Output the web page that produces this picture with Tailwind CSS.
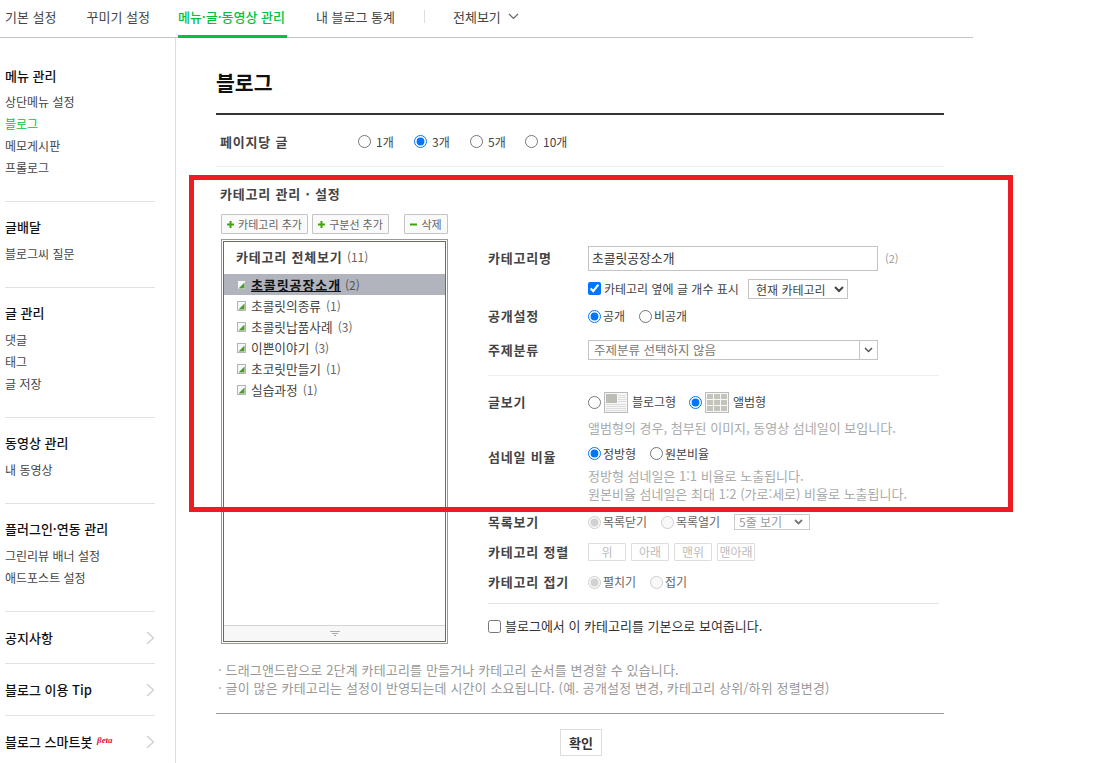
<!doctype html>
<html lang="ko">
  <head>
    <meta charset="utf-8" />
    <title>블로그 관리</title>
    <script src="https://cdn.jsdelivr.net/npm/@tailwindcss/browser@4"></script>
  </head>
  <body class="bg-white font-['Noto_Sans_CJK_KR','Noto_Sans',sans-serif] text-[12px] text-[#444] overflow-hidden">
    <div class="relative w-[1099px] h-[763px] overflow-hidden">
      <!-- top tabs -->
      <nav class="flex w-[973px] h-[38px] border-b border-[#c4c4c4] text-[13px] text-[#444]">
        <a class="ml-[5px] pt-[7px]">기본 설정</a>
        <a class="ml-[30px] pt-[7px]">꾸미기 설정</a>
        <a class="ml-[28px] w-[109px] h-[38px] pt-[7px] border-b-[3px] border-[#03c13c] text-[#03c13c] font-medium">메뉴·글·동영상 관리</a>
        <a class="ml-[29px] pt-[7px]">내 블로그 통계</a>
        <span class="ml-[29px] mt-[10px] w-px h-[13px] bg-[#ddd]"></span>
        <a class="ml-[28px] pt-[7px]">전체보기</a>
        <svg class="ml-[7px] mt-[13px]" width="11" height="7" viewBox="0 0 11 7" fill="none" stroke="#666" stroke-width="1.2"><path d="M1 1l4.5 4.5L10 1" /></svg>
      </nav>

      <div class="flex">
        <!-- sidebar -->
        <aside class="w-[176px] h-[725px] border-r border-[#ddd] pl-[5px] pr-[20px]">
          <section class="h-[164px] pt-[28px] border-b border-[#e2e2e2]">
            <h3 class="h-[20px] leading-[20px] text-[13px] font-medium text-[#111]">메뉴 관리</h3>
            <ul class="mt-[5px] leading-[22px]">
              <li>상단메뉴 설정</li>
              <li class="text-[#03c13c]">블로그</li>
              <li>메모게시판</li>
              <li>프롤로그</li>
            </ul>
          </section>
          <section class="h-[86px] pt-[15px] border-b border-[#e2e2e2]">
            <h3 class="h-[20px] leading-[20px] text-[13px] font-medium text-[#111]">글배달</h3>
            <ul class="mt-[6px] leading-[22px]"><li>블로그씨 질문</li></ul>
          </section>
          <section class="h-[130px] pt-[15px] border-b border-[#e2e2e2]">
            <h3 class="h-[20px] leading-[20px] text-[13px] font-medium text-[#111]">글 관리</h3>
            <ul class="mt-[6px] leading-[22px]"><li>댓글</li><li>태그</li><li>글 저장</li></ul>
          </section>
          <section class="h-[86px] pt-[15px] border-b border-[#e2e2e2]">
            <h3 class="h-[20px] leading-[20px] text-[13px] font-medium text-[#111]">동영상 관리</h3>
            <ul class="mt-[6px] leading-[22px]"><li>내 동영상</li></ul>
          </section>
          <section class="h-[108px] pt-[15px] border-b border-[#e2e2e2]">
            <h3 class="h-[20px] leading-[20px] text-[13px] font-medium text-[#111]">플러그인·연동 관리</h3>
            <ul class="mt-[6px] leading-[22px]"><li>그린리뷰 배너 설정</li><li>애드포스트 설정</li></ul>
          </section>
          <section class="h-[52px] flex items-center justify-between border-b border-[#e2e2e2] text-[13px] font-medium text-[#111]">
            <span>공지사항</span>
            <svg width="9" height="14" viewBox="0 0 9 14" fill="none" stroke="#ccc" stroke-width="1.2"><path d="M1 1l6.5 6L1 13" /></svg>
          </section>
          <section class="h-[52px] flex items-center justify-between border-b border-[#e2e2e2] text-[13px] font-medium text-[#111]">
            <span>블로그 이용 Tip</span>
            <svg width="9" height="14" viewBox="0 0 9 14" fill="none" stroke="#ccc" stroke-width="1.2"><path d="M1 1l6.5 6L1 13" /></svg>
          </section>
          <section class="h-[52px] flex items-center justify-between text-[13px] font-medium text-[#111]">
            <span>블로그 스마트봇 <sup class="ml-[1px] text-[9px] font-bold italic text-[#e0103a] font-['Liberation_Serif',serif]">βeta</sup></span>
            <svg width="9" height="14" viewBox="0 0 9 14" fill="none" stroke="#ccc" stroke-width="1.2"><path d="M1 1l6.5 6L1 13" /></svg>
          </section>
        </aside>

        <!-- main -->
        <main class="ml-[40px] w-[728px]">
          <h1 class="h-[77px] pt-[26px] leading-[36px] text-[20.5px] font-bold text-[#111] border-b-2 border-[#333]">블로그</h1>

          <div class="flex items-center h-[52px] pt-[2px] pl-[4px] border-b border-[#eee]">
            <strong class="w-[138px] text-[13px] tracking-[.8px] font-bold text-[#444]">페이지당 글</strong>
            <label class="flex items-center gap-[5px] w-[56px]"><input type="radio" name="page" class="m-0" />1개</label>
            <label class="flex items-center gap-[5px] w-[56px]"><input type="radio" name="page" class="m-0" checked />3개</label>
            <label class="flex items-center gap-[5px] w-[55px]"><input type="radio" name="page" class="m-0" />5개</label>
            <label class="flex items-center gap-[5px]"><input type="radio" name="page" class="m-0" />10개</label>
          </div>

          <h2 class="mt-[17px] ml-[4px] h-[20px] leading-[20px] text-[13px] tracking-[.8px] font-bold text-[#444]">카테고리 관리 · 설정</h2>

          <div class="flex mt-[10px]">
            <!-- category tree -->
            <div class="ml-[5px] w-[227px]">
              <div class="flex h-[20px] text-[#666]">
                <button class="flex items-center justify-center gap-[4px] w-[87px] border border-[#c4c4c4] rounded-[1px] bg-[#fafafa] text-[11px]">
                  <svg width="7" height="7" viewBox="0 0 7 7" fill="#3ca70a"><path d="M2.500 0h2v2.500H7v2H4.500V7h-2V4.500H0v-2h2.500z" /></svg>카테고리 추가
                </button>
                <button class="ml-[4px] flex items-center justify-center gap-[4px] w-[77px] border border-[#c4c4c4] rounded-[1px] bg-[#fafafa] text-[11px]">
                  <svg width="7" height="7" viewBox="0 0 7 7" fill="#3ca70a"><path d="M2.500 0h2v2.500H7v2H4.500V7h-2V4.500H0v-2h2.500z" /></svg>구분선 추가
                </button>
                <button class="ml-[15px] flex items-center justify-center gap-[4px] w-[44px] border border-[#c4c4c4] rounded-[1px] bg-[#fafafa] text-[11px]">
                  <svg width="7" height="7" viewBox="0 0 7 7" fill="#3ca70a"><path d="M0 2.500h7v2H0z" /></svg>삭제
                </button>
              </div>
              <div class="mt-[5px] h-[405px] border border-[#999] p-px">
                <div class="flex flex-col h-full border border-[#6b6b60]">
                  <div class="h-[32px] pt-[5px] pl-[12px] leading-[20px] shrink-0">
                    <strong class="text-[13px] tracking-[.8px] font-bold text-[#444]">카테고리 전체보기</strong> <span class="ml-[1px] text-[#666]">(11)</span>
                  </div>
                  <ul class="flex-1 leading-[21px] text-[12.7px]">
                    <li class="flex items-center h-[21px] pl-[13px] bg-[#b1b3bd]">
                      <svg class="mr-[5px]" width="9" height="10" viewBox="0 0 9 10"><rect x=".5" y=".5" width="8" height="9" fill="#f4f7fb" stroke="#b4b4b4" /><path d="M1.500 8.500L7.500 2.500v6z" fill="#4f9a2c" /></svg>
                      <b class="text-[13px] tracking-[.9px] font-bold text-[#111] underline">초콜릿공장소개</b><span class="ml-[4px] text-[12px] text-[#555]">(2)</span>
                    </li>
                    <li class="flex items-center h-[21px] pl-[13px]">
                      <svg class="mr-[5px]" width="9" height="10" viewBox="0 0 9 10"><rect x=".5" y=".5" width="8" height="9" fill="#f4f7fb" stroke="#b4b4b4" /><path d="M1.500 8.500L7.500 2.500v6z" fill="#4f9a2c" /></svg>
                      초콜릿의종류<span class="ml-[5px] text-[12px] text-[#666]">(1)</span>
                    </li>
                    <li class="flex items-center h-[21px] pl-[13px]">
                      <svg class="mr-[5px]" width="9" height="10" viewBox="0 0 9 10"><rect x=".5" y=".5" width="8" height="9" fill="#f4f7fb" stroke="#b4b4b4" /><path d="M1.500 8.500L7.500 2.500v6z" fill="#4f9a2c" /></svg>
                      초콜릿납품사례<span class="ml-[5px] text-[12px] text-[#666]">(3)</span>
                    </li>
                    <li class="flex items-center h-[21px] pl-[13px]">
                      <svg class="mr-[5px]" width="9" height="10" viewBox="0 0 9 10"><rect x=".5" y=".5" width="8" height="9" fill="#f4f7fb" stroke="#b4b4b4" /><path d="M1.500 8.500L7.500 2.500v6z" fill="#4f9a2c" /></svg>
                      이쁜이야기<span class="ml-[5px] text-[12px] text-[#666]">(3)</span>
                    </li>
                    <li class="flex items-center h-[21px] pl-[13px]">
                      <svg class="mr-[5px]" width="9" height="10" viewBox="0 0 9 10"><rect x=".5" y=".5" width="8" height="9" fill="#f4f7fb" stroke="#b4b4b4" /><path d="M1.500 8.500L7.500 2.500v6z" fill="#4f9a2c" /></svg>
                      초코릿만들기<span class="ml-[5px] text-[12px] text-[#666]">(1)</span>
                    </li>
                    <li class="flex items-center h-[21px] pl-[13px]">
                      <svg class="mr-[5px]" width="9" height="10" viewBox="0 0 9 10"><rect x=".5" y=".5" width="8" height="9" fill="#f4f7fb" stroke="#b4b4b4" /><path d="M1.500 8.500L7.500 2.500v6z" fill="#4f9a2c" /></svg>
                      실습과정<span class="ml-[5px] text-[12px] text-[#666]">(1)</span>
                    </li>
                  </ul>
                  <div class="flex items-center justify-center h-[16px] shrink-0 border-t border-[#d4d4d4] bg-[#f7f7f7]">
                    <svg width="10" height="6" viewBox="0 0 10 6" stroke="#aaa"><path d="M0 .5h10M2 2.500h6M4 4.500h2" /></svg>
                  </div>
                </div>
              </div>
            </div>

            <!-- settings form -->
            <div class="ml-[40px] w-[451px] pt-[32px]">
              <div class="flex items-center h-[25px]">
                <strong class="w-[100px] pb-[2px] text-[13px] tracking-[.8px] font-bold text-[#444]">카테고리명</strong>
                <input value="초콜릿공장소개" class="w-[290px] h-[25px] px-[3px] pb-[2px] border border-[#c4c4c4] text-[12.8px] text-[#333]" />
                <span class="ml-[7px] text-[11px] text-[#999]">(2)</span>
              </div>
              <div class="flex items-center h-[19px] mt-[8px] ml-[100px]">
                <label class="flex items-center gap-[3px] w-[151px]"><input type="checkbox" checked class="m-0" />카테고리 옆에 글 개수 표시</label>
                <select class="ml-[9px] w-[100px] h-[20px] border border-[#c4c4c4] py-0 px-[3px] text-[12px] text-[#444]"><option>현재 카테고리</option></select>
              </div>
              <div class="flex items-center h-[20px] mt-[8px]">
                <strong class="w-[100px] text-[13px] tracking-[.8px] font-bold text-[#444]">공개설정</strong>
                <label class="flex items-center gap-[2px] w-[51px]"><input type="radio" name="open" checked class="m-0" />공개</label>
                <label class="flex items-center gap-[2px]"><input type="radio" name="open" class="m-0" />비공개</label>
              </div>
              <div class="flex items-center h-[20px] mt-[14px]">
                <strong class="w-[100px] text-[13px] tracking-[.8px] font-bold text-[#444]">주제분류</strong>
                <div class="flex w-[290px] h-[20px] border border-[#c4c4c4] text-[#777] text-[12.5px]">
                  <span class="flex-1 pl-[5px] leading-[18px]">주제분류 선택하지 않음</span>
                  <span class="flex items-center justify-center w-[18px] border-l border-[#c4c4c4]">
                    <svg width="9" height="6" viewBox="0 0 9 6" fill="none" stroke="#555" stroke-width="1.500"><path d="M1 1l3.500 3.500L8 1" /></svg>
                  </span>
                </div>
              </div>
              <div class="mt-[15px] border-t border-[#eee]"></div>

              <div class="flex items-center h-[22px] mt-[15px]">
                <strong class="w-[100px] text-[13px] tracking-[.8px] font-bold text-[#444]">글보기</strong>
                <input type="radio" name="view" class="m-0" />
                <svg class="ml-[3px]" width="24" height="21" viewBox="0 0 24 21"><rect x=".5" y=".5" width="23" height="20" fill="#f7f7f7" stroke="#bbb" /><rect x="2" y="2" width="11" height="9" fill="#bdbdb5" /><path d="M14 3.500h8M14 5.500h8M14 7.500h8M14 9.500h8M2 12.500h20M2 14.500h20M2 16.500h20M2 18.500h20" stroke="#ddd" /></svg>
                <span class="ml-[4px] w-[57px]">블로그형</span>
                <input type="radio" name="view" checked class="m-0" />
                <svg class="ml-[3px]" width="24" height="21" viewBox="0 0 24 21"><rect x=".5" y=".5" width="23" height="20" fill="#f7f7f7" stroke="#bbb" /><path d="M2 2h6v5H2zM9 2h6v5H9zM16 2h6v5h-6zM2 8h6v5H2zM9 8h6v5H9zM16 8h6v5h-6zM2 14h6v5H2zM9 14h6v5H9zM16 14h6v5h-6z" fill="#c4c4bc" /></svg>
                <span class="ml-[4px]">앨범형</span>
              </div>
              <p class="ml-[100px] mt-[7px] h-[16px] leading-[16px] text-[13px] text-[#aaa]">앨범형의 경우, 첨부된 이미지, 동영상 섬네일이 보입니다.</p>
              <div class="flex h-[20px] mt-[10px]">
                <strong class="w-[100px] pt-[1px] leading-[20px] text-[13px] tracking-[.8px] font-bold text-[#444]">섬네일 비율</strong>
                <label class="flex items-center h-[15px] gap-[2px] w-[62px]"><input type="radio" name="ratio" checked class="m-0" />정방형</label>
                <label class="flex items-center h-[15px] gap-[2px]"><input type="radio" name="ratio" class="m-0" />원본비율</label>
              </div>
              <p class="ml-[100px] mt-[1px] leading-[18px] text-[13px] text-[#aaa]">정방형 섬네일은 1:1 비율로 노출됩니다.<br />원본비율 섬네일은 최대 1:2 (가로:세로) 비율로 노출됩니다.</p>

              <div class="flex items-center h-[18px] mt-[10px]">
                <strong class="w-[100px] text-[13px] tracking-[.8px] font-bold text-[#444]">목록보기</strong>
                <label class="flex items-center gap-[2px] w-[73px] text-[#666]"><input type="radio" name="list" checked disabled class="m-0" />목록닫기</label>
                <label class="flex items-center gap-[2px] w-[73px] text-[#666]"><input type="radio" name="list" disabled class="m-0" />목록열기</label>
                <div class="flex items-center justify-between w-[76px] h-[16px] border border-[#ccc] pl-[4px] pr-[6px] leading-[14px] text-[#999]">
                  <span>5줄 보기</span>
                  <svg width="9" height="6" viewBox="0 0 9 6" fill="none" stroke="#777" stroke-width="1.800"><path d="M1 1l3.500 3.500L8 1" /></svg>
                </div>
              </div>
              <div class="flex items-center h-[18px] mt-[12px]">
                <strong class="w-[100px] text-[13px] tracking-[.8px] font-bold text-[#444]">카테고리 정렬</strong>
                <div class="flex gap-[5px] text-[#bbb]">
                  <button disabled class="w-[38px] h-[18px] border border-[#ddd] rounded-[1px] leading-[16px]">위</button>
                  <button disabled class="w-[38px] h-[18px] border border-[#ddd] rounded-[1px] leading-[16px]">아래</button>
                  <button disabled class="w-[38px] h-[18px] border border-[#ddd] rounded-[1px] leading-[16px]">맨위</button>
                  <button disabled class="w-[38px] h-[18px] border border-[#ddd] rounded-[1px] leading-[16px]">맨아래</button>
                </div>
              </div>
              <div class="flex items-center h-[18px] mt-[12px]">
                <strong class="w-[100px] text-[13px] tracking-[.8px] font-bold text-[#444]">카테고리 접기</strong>
                <label class="flex items-center gap-[2px] w-[62px] text-[#666]"><input type="radio" name="fold" checked disabled class="m-0" />펼치기</label>
                <label class="flex items-center gap-[2px] text-[#666]"><input type="radio" name="fold" disabled class="m-0" />접기</label>
              </div>
              <div class="mt-[12px] border-t border-[#e2e2e2]"></div>
              <label class="flex items-center gap-[4px] h-[18px] mt-[13px] text-[13px] text-[#333]"><input type="checkbox" class="m-0" />블로그에서 이 카테고리를 기본으로 보여줍니다.</label>
            </div>
          </div>

          <p class="ml-[2px] mt-[17px] leading-[18px] text-[13px] tracking-[.15px] text-[#999]">· 드래그앤드랍으로 2단계 카테고리를 만들거나 카테고리 순서를 변경할 수 있습니다.<br />· 글이 많은 카테고리는 설정이 반영되는데 시간이 소요됩니다. (예. 공개설정 변경, 카테고리 상위/하위 정렬변경)</p>
          <div class="mt-[16px] border-t border-[#999]"></div>
          <div class="mt-[15px] flex justify-center pl-[2px]">
            <button class="w-[42px] h-[27px] border border-[#ddd] bg-white text-[13px] font-bold text-[#333]">확인</button>
          </div>
        </main>
      </div>

      <!-- red highlight drawn over the screenshot -->
      <div class="absolute left-[189px] top-[175px] w-[824px] h-[337px] border-[5px] border-[#ed1c24] pointer-events-none"></div>
    </div>
  </body>
</html>
